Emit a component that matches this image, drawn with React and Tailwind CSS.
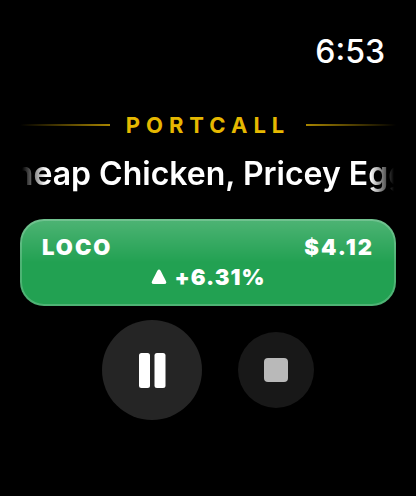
const quote = {
  symbol: 'LOCO',
  price: '$4.12',
  change: '+6.31%',
};

function Header() {
  return (
    <div className="flex items-center gap-4">
      <span className="h-0.5 flex-1 bg-linear-to-l from-[#a88500] to-transparent" />
      <h1 className="text-[22px] leading-7 font-bold tracking-[6px] text-[#e6b800]">PORTCALL</h1>
      <span className="h-0.5 flex-1 bg-linear-to-r from-[#a88500] to-transparent" />
    </div>
  );
}

function Headline({ children }) {
  return (
    <div className="mt-[15px] flex justify-center overflow-hidden mask-x-from-[calc(100%-26px)] mask-x-to-[calc(100%-2px)]">
      <h2 className="shrink-0 whitespace-nowrap text-[32px] leading-10 font-semibold">{children}</h2>
    </div>
  );
}

function QuoteCard({ symbol, price, change }) {
  return (
    <section className="mt-[25px] rounded-[24px] border-2 border-white/20 bg-[#22a152] bg-linear-to-b from-white/20 to-transparent to-50% bg-origin-border px-5 pt-[11px] pb-3 text-[22px] leading-[30px] font-black">
      <div className="flex justify-between">
        <span className="tracking-[2px]">{symbol}</span>
        <span className="tracking-[2px]">{price}</span>
      </div>
      <div className="flex items-center justify-center gap-2">
        <svg viewBox="0 0 16 16" className="size-4" fill="currentColor" aria-hidden="true">
          <path d="M6.2 1.9Q8-.8 9.8 1.9L15 12.2Q16 15 13.2 15H2.8Q0 15 1 12.2Z" />
        </svg>
        <span className="tracking-[1px]">{change}</span>
      </div>
    </section>
  );
}

function Controls() {
  return (
    <div className="mt-3.5 flex items-center justify-center gap-9">
      <button type="button" aria-label="Pause" className="flex size-[100px] items-center justify-center rounded-full bg-[#252525]">
        <svg viewBox="0 0 28 36" className="h-9 w-7" fill="white">
          <rect x="1" y="1" width="11" height="35" rx="2.5" />
          <rect x="16.5" y="1" width="11" height="35" rx="2.5" />
        </svg>
      </button>
      <button type="button" aria-label="Stop" className="flex size-[76px] items-center justify-center rounded-full bg-[#181818]">
        <span className="size-6 rounded bg-[#b9b9b9]" />
      </button>
    </div>
  );
}

export default function App() {
  return (
    <div className="min-h-screen bg-black px-5 pt-8 font-['Inter',sans-serif] text-white">
      <div className="flex justify-end pr-[11px] text-[32px] leading-10 font-medium">
        <time>6:53</time>
      </div>
      <main className="mt-[39px]">
        <Header />
        <Headline>Cheap Chicken, Pricey Eggs</Headline>
        <QuoteCard {...quote} />
        <Controls />
      </main>
    </div>
  );
}
